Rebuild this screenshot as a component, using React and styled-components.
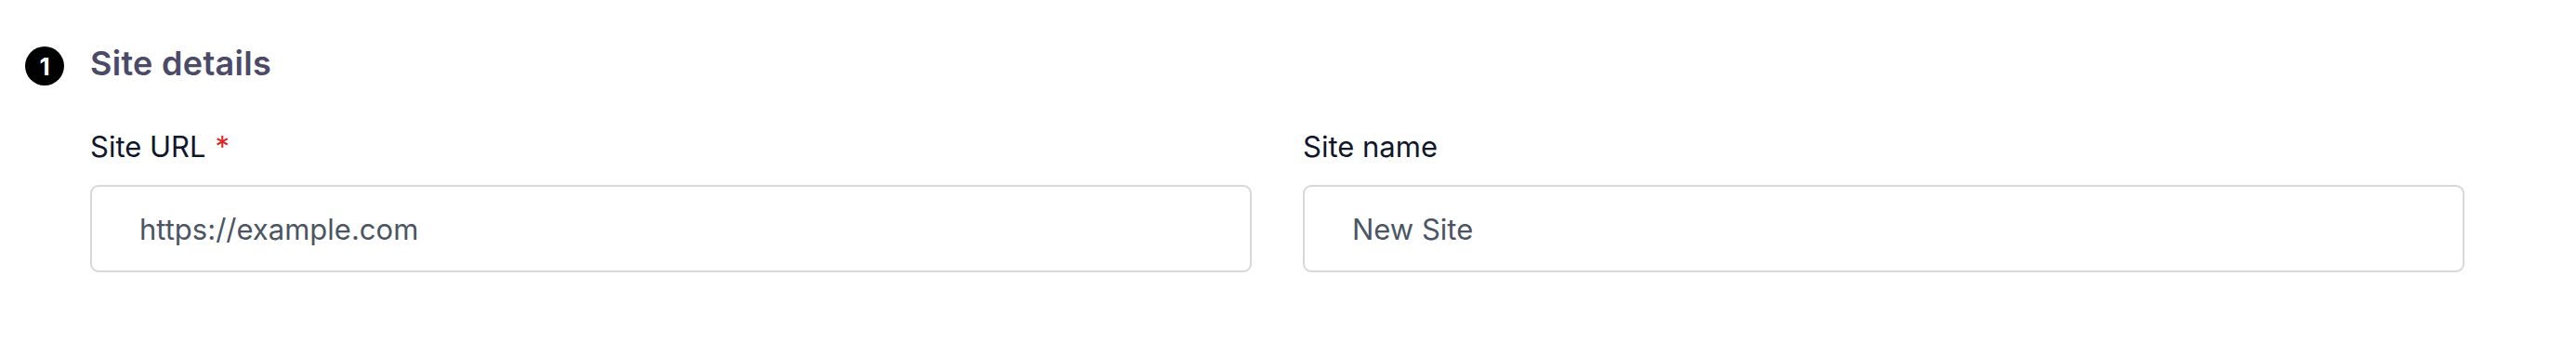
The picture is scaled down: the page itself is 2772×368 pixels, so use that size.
import React from "react";
import styled, { createGlobalStyle } from "styled-components";

const GlobalStyle = createGlobalStyle`
  html, body {
    margin: 0;
    padding: 0;
    background: #ffffff;
  }
  body {
    font-family: Inter, "Noto Sans", sans-serif;
  }
`;

const Section = styled.section`
  padding: 50px 120px 0 27px;
`;

const SectionHeader = styled.div`
  display: flex;
  align-items: center;
  gap: 28px;
  height: 42px;
`;

const StepBadge = styled.span`
  width: 42px;
  height: 42px;
  border-radius: 50%;
  background: #000;
  color: #fff;
  display: flex;
  align-items: center;
  justify-content: center;
  font-size: 26px;
  font-weight: 700;
  flex-shrink: 0;
`;

const Heading = styled.h2`
  margin: 0;
  padding-bottom: 6px;
  font-size: 36px;
  font-weight: 600;
  letter-spacing: 0.3px;
  color: #4b4a68;
  line-height: 42px;
`;

const Fields = styled.div`
  display: grid;
  grid-template-columns: 1fr 1fr;
  column-gap: 55px;
  margin: 45px 0 0 70px;
`;

const Field = styled.div`
  display: flex;
  flex-direction: column;
  gap: 20px;
`;

const Label = styled.label`
  font-size: 31px;
  line-height: 42px;
  color: #0f172a;
`;

const Required = styled.span`
  color: #dc2626;
  margin-left: 10px;
`;

const Input = styled.input`
  box-sizing: border-box;
  width: 100%;
  height: 94px;
  border: 2px solid #d8d8dc;
  border-radius: 9px;
  padding: 0 0 0 51px;
  font-family: Inter, "Noto Sans", sans-serif;
  font-size: 31px;
  color: #4b5563;
  background: #fff;
  outline: none;
  &::placeholder {
    color: #4b5563;
  }
`;

const App = () => (
  <>
    <GlobalStyle />
    <Section>
      <SectionHeader>
        <StepBadge>1</StepBadge>
        <Heading>Site details</Heading>
      </SectionHeader>
      <Fields>
        <Field>
          <Label>
            Site URL<Required>*</Required>
          </Label>
          <Input placeholder="https://example.com" />
        </Field>
        <Field>
          <Label>Site name</Label>
          <Input placeholder="New Site" />
        </Field>
      </Fields>
    </Section>
  </>
);

export default App;
